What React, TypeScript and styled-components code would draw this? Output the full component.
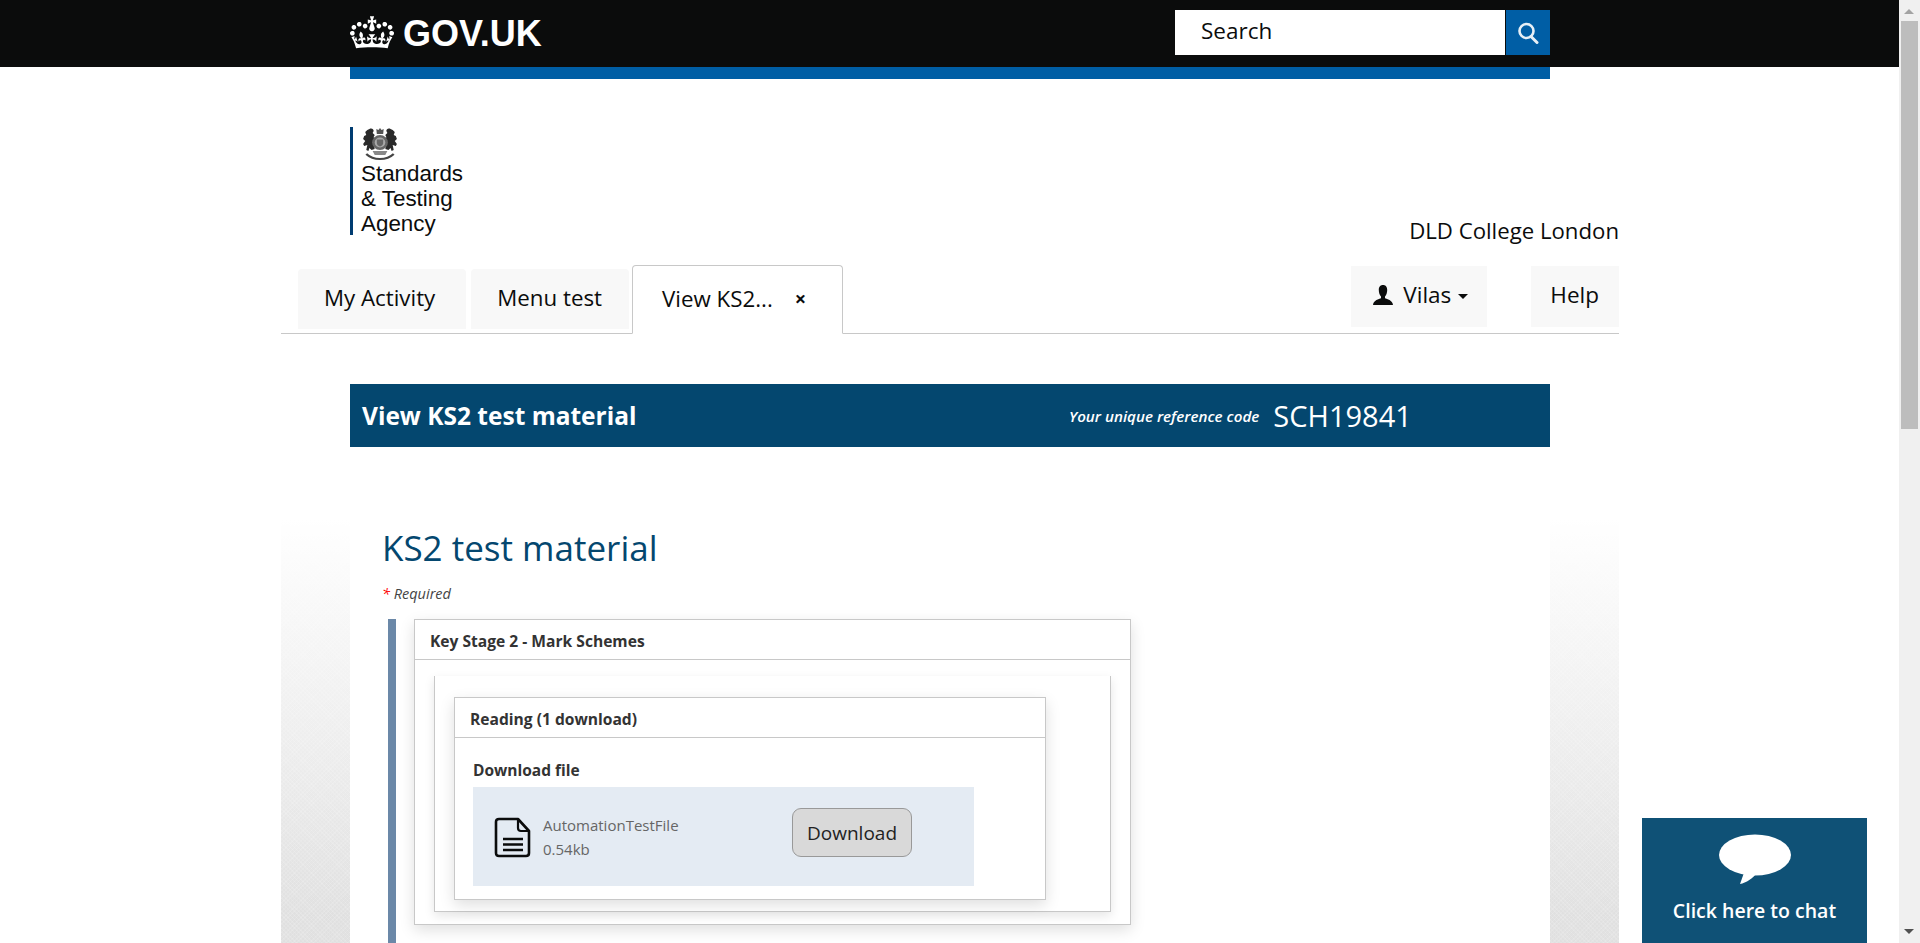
import styled, { createGlobalStyle } from "styled-components"

const GlobalStyle = createGlobalStyle`
    body {
        width: 1900px;
        margin: 0;
        background-color: #fff;
        color: #0b0c0c;
        font-family: "Open Sans", "Liberation Sans", sans-serif;
    }
`

const TopBar = styled.header`
    height: 67px;
    background-color: #0b0c0c;
`

const TopBarInner = styled.div`
    box-sizing: border-box;
    display: flex;
    align-items: center;
    justify-content: space-between;
    width: 1200px;
    height: 100%;
    margin: 0 auto;
`

const Brand = styled.div`
    display: flex;
    align-items: center;
    gap: 9px;
    color: #fff;
    svg {
        width: 44px;
        height: 33px;
        margin-top: -3px;
    }
`

const BrandName = styled.span`
    font-family: "Liberation Sans", Arial, sans-serif;
    font-size: 36px;
    font-weight: 700;
    line-height: 1;
`

const SearchForm = styled.form`
    display: flex;
    gap: 1px;
    height: 45px;
    margin-top: -2px;
`

const SearchInput = styled.div`
    box-sizing: border-box;
    display: flex;
    align-items: center;
    width: 330px;
    padding: 0 0 5px 26px;
    background-color: #fff;
    font-size: 22.500px;
`

const SearchButton = styled.button`
    display: flex;
    align-items: center;
    justify-content: center;
    width: 44px;
    padding: 0;
    border: 0;
    background-color: #005ea5;
    color: #fff;
`

const Stripe = styled.div`
    width: 1200px;
    height: 12px;
    margin: 0 auto;
    background-color: #005ea5;
`

const Shell = styled.div`
    box-sizing: border-box;
    width: 1338px;
    margin: 0 auto;
`

const Masthead = styled.div`
    display: flex;
    align-items: flex-end;
    justify-content: space-between;
    height: 186px;
    padding: 0 0 0 69px;
`

const AgencyLogo = styled.div`
    box-sizing: border-box;
    width: 120px;
    height: 108px;
    margin-bottom: 30px;
    padding-left: 8px;
    border-left: 3px solid #003c71;
    font-family: "Liberation Sans", Arial, sans-serif;
    font-size: 22.400px;
    line-height: 25px;
    color: #0b0c0c;
    svg {
        display: block;
        width: 38px;
        height: 34px;
        filter: blur(0.4px);
    }
    span {
        display: block;
    }
`

const CollegeName = styled.div`
    margin-bottom: 20px;
    font-size: 22.200px;
    line-height: 28px;
`

const TabBar = styled.nav`
    display: flex;
    align-items: flex-end;
    height: 68px;
    padding-left: 17px;
    border-bottom: 1px solid #c8c8c8;
`

const Tab = styled.div<{ $right: number }>`
    box-sizing: border-box;
    display: flex;
    align-items: center;
    height: 60px;
    margin-right: 5px;
    margin-bottom: 4px;
    padding: 0 ${props => props.$right}px 3px 26px;
    border-radius: 4px 4px 0 0;
    font-size: 22.300px;
    background-color: #f8f8f8;
`

const ActiveTab = styled.div`
    box-sizing: border-box;
    display: flex;
    align-items: center;
    height: 69px;
    margin-left: -2px;
    margin-bottom: -1px;
    padding: 0 26px 3px 29px;
    border: 1px solid #c8c8c8;
    border-bottom: 1px solid #fff;
    border-radius: 4px 4px 0 0;
    background-color: #fff;
    font-size: 22.300px;
`

const TabClose = styled.span`
    margin-left: 22px;
    margin-right: 10px;
    font-size: 20px;
    font-weight: 700;
`

const RightTabs = styled.div`
    display: flex;
    align-items: flex-end;
    gap: 44px;
    margin-left: auto;
`

const UserTab = styled.div`
    box-sizing: border-box;
    display: flex;
    align-items: center;
    height: 61px;
    margin-bottom: 6px;
    padding: 0 19px 4px 21px;
    background-color: #f8f8f8;
    font-size: 22.500px;
`

const HelpTab = styled(UserTab)`
    padding: 0 20px 4px 19px;
`

const UserGlyph = styled.svg`
    width: 22px;
    height: 22px;
    margin-right: 9px;
`

const Caret = styled.span`
    width: 0;
    height: 0;
    margin-left: 7px;
    margin-top: 3px;
    border-top: 5px solid #0b0c0c;
    border-left: 5px solid transparent;
    border-right: 5px solid transparent;
`

const PageBanner = styled.div`
    box-sizing: border-box;
    display: flex;
    align-items: center;
    width: 1200px;
    height: 63px;
    margin: 50px auto 0 auto;
    padding: 0 12px;
    background-color: #04476f;
    color: #fff;
`

const BannerTitle = styled.h2`
    width: 707px;
    margin: 0;
    font-size: 24.500px;
    font-weight: 700;
`

const BannerHint = styled.span`
    font-size: 15.200px;
    font-style: italic;
    font-weight: 600;
`

const BannerCode = styled.span`
    margin-left: 14px;
    font-size: 29px;
`

const SideShell = styled.div`
    box-sizing: border-box;
    width: 1338px;
    margin: 61px auto 0 auto;
    padding: 0 69px;
    background-color: #e4e4e4;
    background-image:
        linear-gradient(180deg, #fff 10px, rgba(255, 255, 255, 0) 410px),
        repeating-linear-gradient(45deg, rgba(255, 255, 255, 0.07) 0 1px, rgba(0, 0, 0, 0.008) 1px 3px),
        repeating-linear-gradient(-45deg, rgba(255, 255, 255, 0.07) 0 1px, rgba(0, 0, 0, 0.008) 1px 3px);
`

const Content = styled.main`
    box-sizing: border-box;
    min-height: 1608px;
    padding: 16px 32px 0 32px;
    background-color: #fff;
`

const PageTitle = styled.h1`
    margin: 0;
    font-size: 35px;
    font-weight: 400;
    line-height: 48px;
    color: #04476f;
`

const RequiredNote = styled.p`
    margin: 12px 0 15px 0;
    font-size: 14.500px;
    font-style: italic;
    line-height: 20px;
    color: #444;
    b {
        color: #f00;
        font-weight: 400;
    }
`

const StageRow = styled.section`
    display: flex;
    gap: 18px;
    margin-left: 6px;
    min-height: 1100px;
`

const StageBar = styled.div`
    flex: none;
    width: 8px;
    background-color: #6b88a8;
`

const Panel = styled.div<{ $width: number }>`
    box-sizing: border-box;
    align-self: flex-start;
    width: ${props => props.$width}px;
    border: 1px solid #c8c8c8;
    background-color: #fff;
    box-shadow: 0 5px 14px rgba(0, 0, 0, 0.13);
`

const PanelHeader = styled.div`
    box-sizing: border-box;
    display: flex;
    align-items: center;
    height: 40px;
    padding: 2px 0 0 15px;
    border-bottom: 1px solid #c8c8c8;
    font-size: 15.600px;
    font-weight: 700;
    color: #333;
`

const PanelBody = styled.div`
    padding: 16px 19px 12px 19px;
`

const InnerCard = styled.div`
    box-sizing: border-box;
    height: 236px;
    padding: 21px 0 0 19px;
    border: solid #c8c8c8;
    border-width: 0 1px 1px 1px;
    box-shadow: 0 4px 10px rgba(0, 0, 0, 0.1);
`

const DownloadBody = styled.div`
    padding: 22px 17px 13px 18px;
`

const DownloadLabel = styled.div`
    margin-bottom: 7px;
    font-size: 15.500px;
    font-weight: 700;
    line-height: 20px;
    color: #333;
`

const DownloadRow = styled.div`
    box-sizing: border-box;
    display: flex;
    align-items: center;
    width: 501px;
    height: 99px;
    padding: 0 0 0 21px;
    background-color: #e4ebf3;
`

const FileIcon = styled.svg`
    width: 37px;
    height: 42px;
    margin-top: 2px;
`

const FileMeta = styled.div`
    width: 249px;
    margin-left: 12px;
    font-size: 15px;
    line-height: 24px;
    color: #666;
`

const DownloadButton = styled.button`
    box-sizing: border-box;
    width: 120px;
    height: 49px;
    margin-top: -8px;
    border: 1px solid #999;
    border-radius: 9px;
    background-color: #d9d9d9;
    color: #222;
    font-family: inherit;
    font-size: 19px;
`

const ChatWidget = styled.aside`
    position: fixed;
    left: 1642px;
    bottom: 0;
    box-sizing: border-box;
    display: flex;
    flex-direction: column;
    align-items: center;
    width: 225px;
    height: 125px;
    padding-top: 16px;
    background-color: #0f5176;
    color: #fff;
    font-size: 19.500px;
    font-weight: 600;
    svg {
        width: 74px;
        height: 52px;
        margin-bottom: 11px;
    }
`

const ScrollTrack = styled.div`
    position: fixed;
    top: 0;
    right: 0;
    bottom: 0;
    width: 21px;
    background-color: #f0f0f0;
`

const ScrollThumb = styled.div`
    position: absolute;
    top: 21px;
    left: 2px;
    width: 17px;
    height: 408px;
    background-color: #bdbdbd;
`

const ScrollArrow = styled.span<{ $down?: boolean }>`
    position: absolute;
    left: 5px;
    ${props => props.$down ? 'bottom: 9px;' : 'top: 9px;'}
    border-left: 5px solid transparent;
    border-right: 5px solid transparent;
    ${props => props.$down ? 'border-top: 5px solid #505050;' : 'border-bottom: 5px solid #a3a3a3;'}
`

const crownPath = "M25 30.2c3.5 1.5 7.7-.2 9.1-3.7 1.5-3.6-.2-7.8-3.9-9.2-3.6-1.4-7.6.3-9.1 3.9-1.4 3.5.3 7.5 3.9 9zM9 39.5c3.6 1.5 7.8-.2 9.2-3.7 1.5-3.6-.2-7.8-3.9-9.1-3.6-1.5-7.6.2-9.1 3.8-1.4 3.5.3 7.5 3.8 9zM4.4 57.2c3.5 1.5 7.7-.2 9.1-3.8 1.5-3.6-.2-7.7-3.9-9.1-3.5-1.5-7.6.3-9.1 3.8-1.4 3.5.3 7.6 3.9 9.1zm38.3-21.4c3.5 1.5 7.7-.2 9.1-3.8 1.5-3.6-.2-7.7-3.9-9.1-3.6-1.5-7.6.3-9.1 3.8-1.3 3.6.4 7.7 3.9 9.1zm64.4-5.6c-3.6 1.5-7.8-.2-9.1-3.7-1.5-3.6.2-7.8 3.8-9.2 3.6-1.4 7.7.3 9.2 3.9 1.3 3.5-.4 7.5-3.9 9zm15.9 9.3c-3.6 1.5-7.7-.2-9.1-3.7-1.5-3.6.2-7.8 3.7-9.1 3.6-1.5 7.7.2 9.2 3.8 1.5 3.5-.3 7.5-3.8 9zm4.7 17.7c-3.6 1.5-7.8-.2-9.2-3.8-1.5-3.6.2-7.7 3.9-9.1 3.6-1.5 7.7.3 9.2 3.8 1.3 3.5-.4 7.6-3.9 9.1zM89.3 35.8c-3.6 1.5-7.8-.2-9.2-3.8-1.4-3.6.2-7.7 3.9-9.1 3.6-1.5 7.7.3 9.2 3.8 1.4 3.6-.3 7.7-3.9 9.1zM69.7 17.7l8.9 4.7V9.3l-8.9 2.8c-.2-.3-.5-.6-.9-.9L72.4 0H59.6l3.5 11.2c-.3.3-.6.5-.9.9l-8.8-2.8v13.1l8.8-4.7c.3.3.6.7.9.9l-5 15.4v.1c-.2.8-.4 1.6-.4 2.4 0 4.1 3.1 7.5 7 8.1h.2c.3 0 .7.1 1 .1.4 0 .7 0 1-.1h.2c4-.6 7.1-4.1 7.1-8.1 0-.8-.1-1.7-.4-2.4V34l-5.1-15.4c.4-.2.7-.6 1-.9zM66 92.8c16.9 0 32.8 1.1 47.1 3.2 4-16.9 8.9-26.7 14-33.5l-9.6-3.4c1 4.9 1.1 7.2 0 10.2-1.5-1.4-3-4.3-4.2-8.7L108.6 76c2.8-2 5-3.2 7.5-3.3-4.4 9.4-10 11.9-13.6 11.2-4.3-.8-6.3-4.6-5.6-7.9 1-4.7 5.7-5.9 8-.5 4.3-8.7-3-11.4-7.6-8.8 7.1-7.2 7.9-13.5 2.1-21.1-8 6.1-8.1 12.3-4.5 20.8-4.7-5.4-12.1-2.5-9.5 6.2 3.4-5.2 7.9-2 7.2 3.1-.6 4.3-6.4 7.8-13.5 7.2-10.3-.9-10.9-8-11.2-13.8 2.5-.5 7.1 1.8 11 7.3L80.2 60c-4.1 4.4-8 5.3-12.3 5.4 1.4-4.4 8-11.6 8-11.6H55.5s6.4 7.2 7.9 11.6c-4.2-.1-8-1-12.3-5.4l1.4 16.4c3.9-5.5 8.5-7.7 10.9-7.3-.3 5.8-.9 12.8-11.1 13.8-7.2.6-12.9-2.9-13.5-7.2-.7-5 3.8-8.3 7.1-3.1 2.7-8.7-4.6-11.6-9.4-6.2 3.7-8.5 3.6-14.7-4.6-20.8-5.8 7.6-5 13.9 2.2 21.1-4.7-2.6-11.9.1-7.7 8.8 2.3-5.5 7.1-4.2 8.1.5.7 3.3-1.3 7.1-5.7 7.9-3.5.7-9-1.8-13.5-11.2 2.5.1 4.7 1.3 7.5 3.3l-4.7-15.4c-1.2 4.4-2.7 7.2-4.3 8.7-1.1-3-.9-5.3 0-10.2l-9.5 3.4c5 6.9 9.9 16.7 14 33.5 14.8-2.1 30.8-3.2 47.7-3.2z"

const RoyalCrest = () => (
    <svg viewBox="0 0 36 34" preserveAspectRatio="none">
        {/* lion */}
        <path fill="#2a2a2a" d="M8 2c2-1 4 0 4 2l-1 2 2 2-1 2 1 3-1 5 1 4-3 1-2-2-1 3-2-1 1-5-3 1-1-2 2-3-2-2 1-3 2-1-1-3 2-2z" />
        {/* unicorn */}
        <path fill="#2a2a2a" d="M28 2c-2-1-4 0-4 2l1 2-2 2 1 2-1 3 1 5-1 4 3 1 2-2 1 3 2-1-1-5 3 1 1-2-2-3 2-2-1-3-2-1 1-3-2-2z" />
        {/* crown */}
        <path fill="#555" d="M14.500 2l2 1 1.500-2 1.500 2 2-1-.5 5h-6z" />
        {/* shield in garter */}
        <circle cx="18" cy="15.500" r="7.500" fill="#666" />
        <circle cx="18" cy="15.500" r="5" fill="#a8a8a8" />
        <path fill="#666" d="M15 12.500h6v3.500c0 2-1.500 3-3 3.500-1.500-.5-3-1.500-3-3.500z" />
        {/* motto ribbon */}
        <path fill="none" stroke="#444" strokeWidth="2.200" d="M5 27c4 4 8 5 13 5s9-1 13-5" />
        <path fill="#888" d="M11 24h14l-2 4H13z" />
    </svg>
)

const App = () => {
    return (
        <>
            <GlobalStyle />
            <TopBar>
                <TopBarInner>
                    <Brand>
                        <svg viewBox="0 0 132 97">
                            <path fill="currentColor" fillRule="evenodd" d={crownPath} />
                        </svg>
                        <BrandName>GOV.UK</BrandName>
                    </Brand>
                    <SearchForm>
                        <SearchInput>Search</SearchInput>
                        <SearchButton type="button" aria-label="Search">
                            <svg width="24" height="26" viewBox="0 0 24 26" fill="none" stroke="currentColor" opacity="0.9">
                                <circle cx="10.500" cy="11" r="7" strokeWidth="2.600" />
                                <path d="M15 16.500l6 6" strokeWidth="3" strokeLinecap="round" />
                            </svg>
                        </SearchButton>
                    </SearchForm>
                </TopBarInner>
            </TopBar>
            <Stripe />
            <Shell>
                <Masthead>
                    <AgencyLogo>
                        <RoyalCrest />
                        <span>Standards</span>
                        <span>&amp; Testing</span>
                        <span>Agency</span>
                    </AgencyLogo>
                    <CollegeName>DLD College London</CollegeName>
                </Masthead>
                <TabBar>
                    <Tab $right={31}>My Activity</Tab>
                    <Tab $right={27}>Menu test</Tab>
                    <ActiveTab>
                        View KS2...
                        <TabClose>×</TabClose>
                    </ActiveTab>
                    <RightTabs>
                        <UserTab>
                            <UserGlyph viewBox="0 0 22 22">
                                <path fill="#0b0c0c" d="M11 1c3 0 4.200 2.200 4.200 5 0 2.500-.8 5-2.200 6.500v1.800c2 1 7.500 1.700 8 6.700H1c.5-5 6-5.700 8-6.700v-1.800C7.600 11 6.800 8.500 6.800 6c0-2.800 1.200-5 4.200-5z" />
                            </UserGlyph>
                            Vilas
                            <Caret />
                        </UserTab>
                        <HelpTab>Help</HelpTab>
                    </RightTabs>
                </TabBar>
            </Shell>
            <PageBanner>
                <BannerTitle>View KS2 test material</BannerTitle>
                <BannerHint>Your unique reference code</BannerHint>
                <BannerCode>SCH19841</BannerCode>
            </PageBanner>
            <SideShell>
                <Content>
                    <PageTitle>KS2 test material</PageTitle>
                    <RequiredNote><b>*</b> Required</RequiredNote>
                    <StageRow>
                        <StageBar />
                        <Panel $width={717}>
                            <PanelHeader>Key Stage 2 - Mark Schemes</PanelHeader>
                            <PanelBody>
                                <InnerCard>
                                    <Panel $width={592}>
                                        <PanelHeader>Reading (1 download)</PanelHeader>
                                        <DownloadBody>
                                            <DownloadLabel>Download file</DownloadLabel>
                                            <DownloadRow>
                                                <FileIcon viewBox="0 0 37 42" fill="none" stroke="#0b0c0c">
                                                    <path strokeWidth="2.600" strokeLinejoin="round" d="M5 2h19l11 12v22c0 2-1 3-3 3H5c-2 0-3-1-3-3V5c0-2 1-3 3-3z" />
                                                    <path strokeWidth="2.200" d="M24 2v9c0 2 1 3 3 3h8" />
                                                    <path strokeWidth="2.600" d="M9 22h20M9 27.500h20M9 33h20" />
                                                </FileIcon>
                                                <FileMeta>
                                                    <div>AutomationTestFile</div>
                                                    <div>0.54kb</div>
                                                </FileMeta>
                                                <DownloadButton type="button">Download</DownloadButton>
                                            </DownloadRow>
                                        </DownloadBody>
                                    </Panel>
                                </InnerCard>
                            </PanelBody>
                        </Panel>
                    </StageRow>
                </Content>
            </SideShell>
            <ChatWidget>
                <svg viewBox="0 0 74 52">
                    <ellipse cx="37" cy="21" rx="36" ry="20.500" fill="#fff" />
                    <path fill="#fff" d="M27 36l-5 14c6-1 13-6 17-11z" />
                </svg>
                Click here to chat
            </ChatWidget>
            <ScrollTrack>
                <ScrollArrow />
                <ScrollThumb />
                <ScrollArrow $down />
            </ScrollTrack>
        </>
    )
}

export default App
